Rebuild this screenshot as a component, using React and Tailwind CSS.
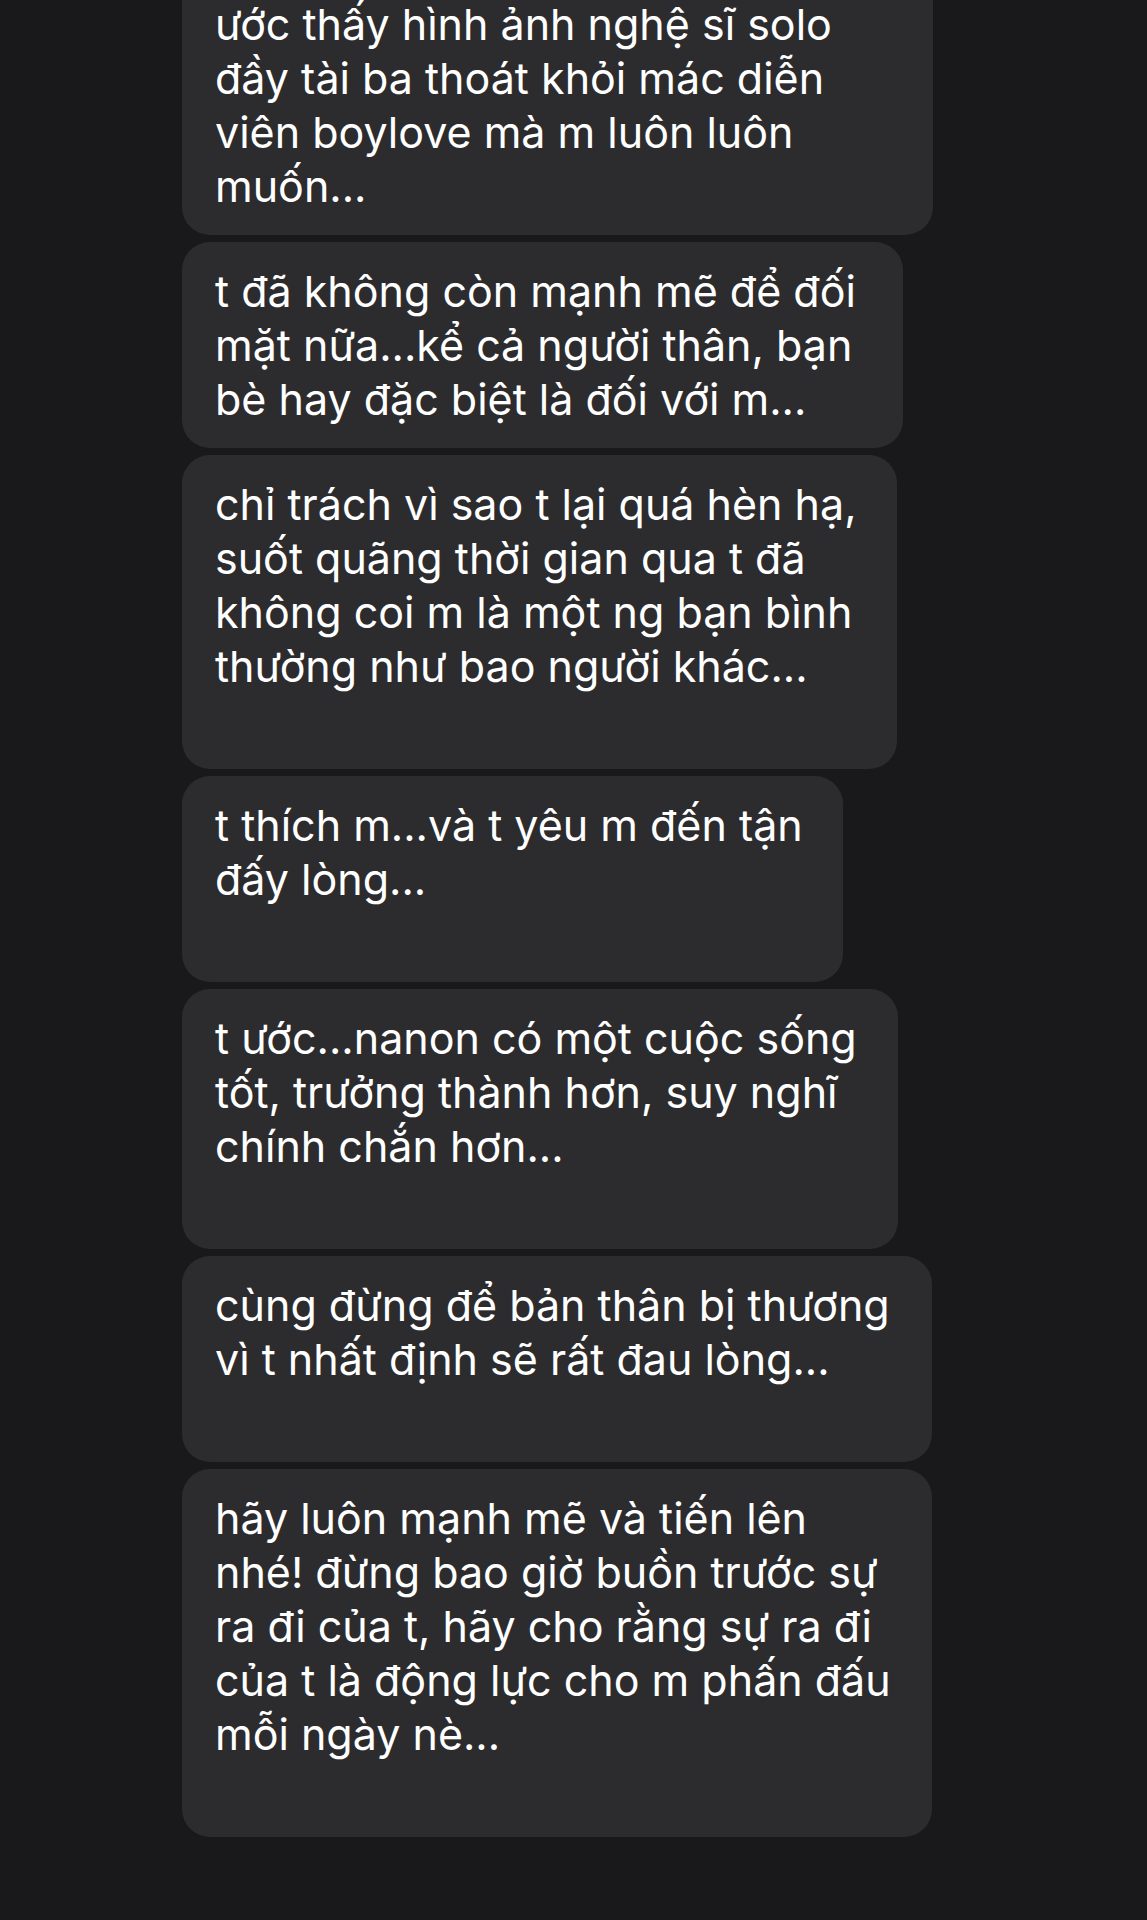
import React from 'react';

const messages = [
  {
    w: 'w-[751px]',
    lines: ['ước thấy hình ảnh nghệ sĩ solo', 'đầy tài ba thoát khỏi mác diễn', 'viên boylove mà m luôn luôn', 'muốn...'],
  },
  {
    w: 'w-[721px]',
    lines: ['t đã không còn mạnh mẽ để đối', 'mặt nữa...kể cả người thân, bạn', 'bè hay đặc biệt là đối với m...'],
  },
  {
    w: 'w-[715px]',
    lines: ['chỉ trách vì sao t lại quá hèn hạ,', 'suốt quãng thời gian qua t đã', 'không coi m là một ng bạn bình', 'thường như bao người khác...', ''],
  },
  {
    w: 'w-[661px]',
    lines: ['t thích m...và t yêu m đến tận', 'đấy lòng...', ''],
  },
  {
    w: 'w-[716px]',
    lines: ['t ước...nanon có một cuộc sống', 'tốt, trưởng thành hơn, suy nghĩ', 'chính chắn hơn...', ''],
  },
  {
    w: 'w-[750px]',
    lines: ['cùng đừng để bản thân bị thương', 'vì t nhất định sẽ rất đau lòng...', ''],
  },
  {
    w: 'w-[750px]',
    lines: [
      'hãy luôn mạnh mẽ và tiến lên',
      'nhé! đừng bao giờ buồn trước sự',
      'ra đi của t, hãy cho rằng sự ra đi',
      'của t là động lực cho m phấn đấu',
      'mỗi ngày nè...',
      '',
    ],
  },
];

function Bubble({ w, lines }) {
  return (
    <div className={`${w} rounded-[28px] bg-[#2c2c2e] pl-[33px] pr-4 py-[22px]`}>
      {lines.map((line, i) => (
        <div key={i} className="h-[54px] whitespace-nowrap leading-[54px]">
          {line}
        </div>
      ))}
    </div>
  );
}

export default function App() {
  return (
    <div className="h-[1920px] overflow-hidden bg-[#19191b] pl-[182px] font-['Inter',sans-serif] text-[43px] text-white">
      <div className="-mt-[25px] flex flex-col items-start gap-[7px]">
        {messages.map((m, i) => (
          <Bubble key={i} {...m} />
        ))}
      </div>
    </div>
  );
}
